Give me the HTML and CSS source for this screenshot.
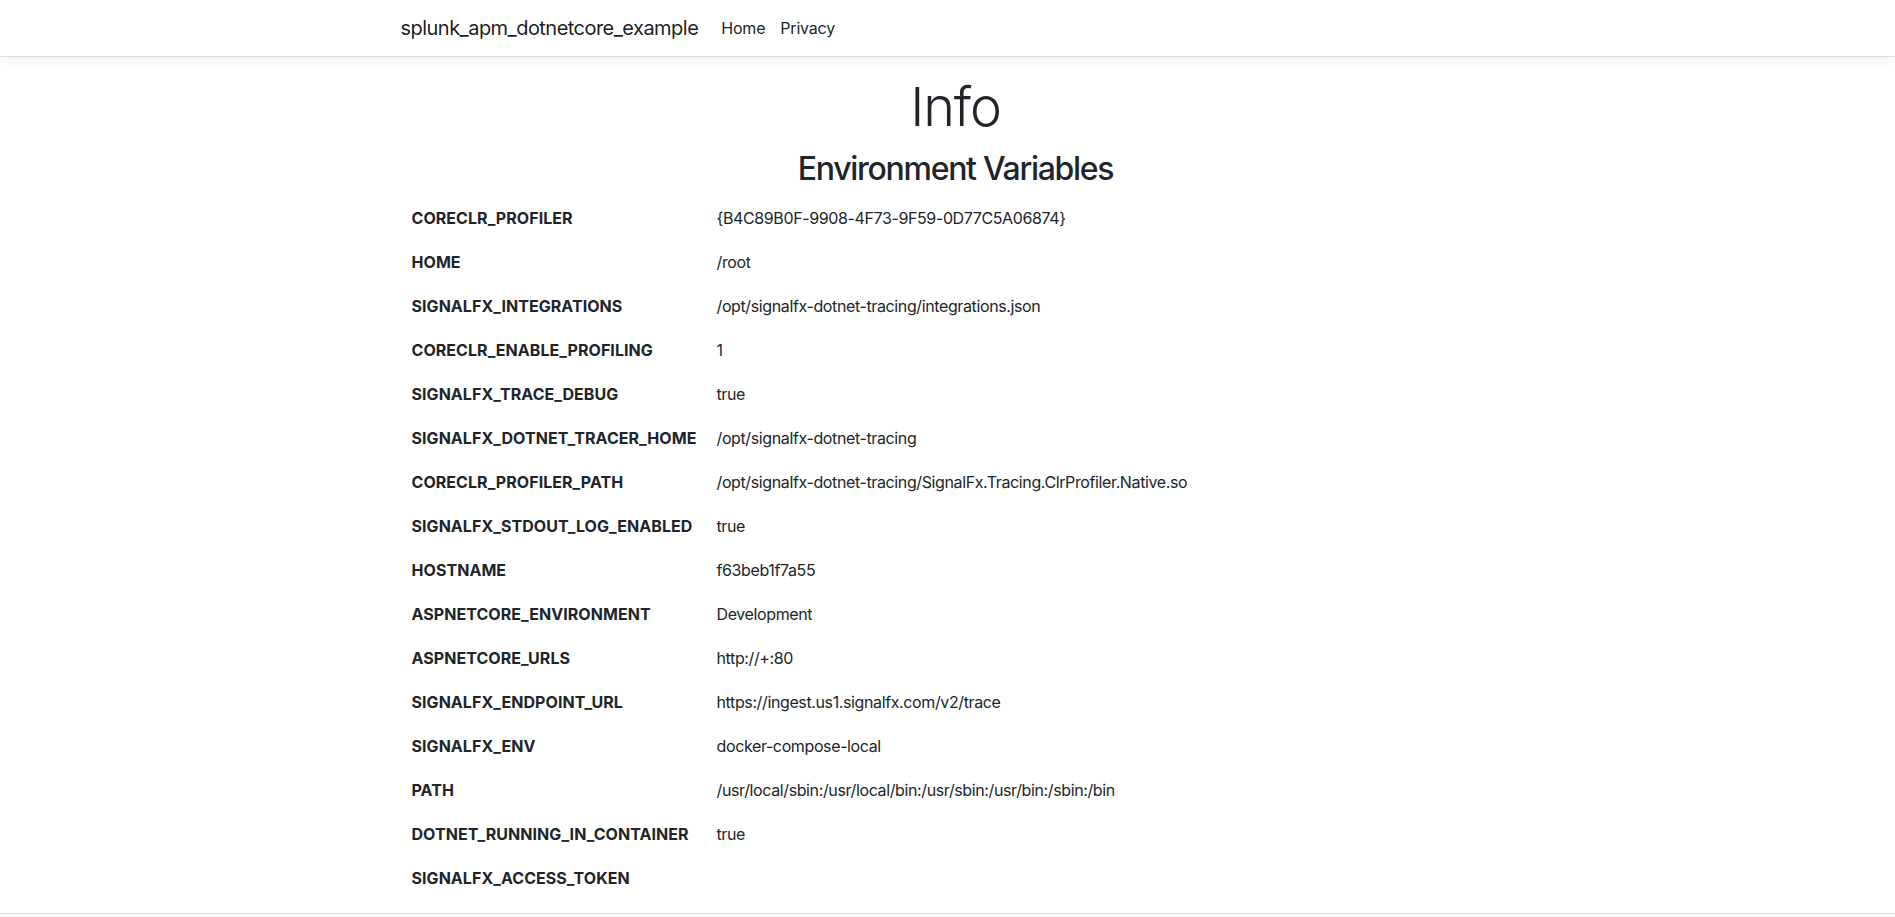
FILE: index.html
```html
<!DOCTYPE html>
<html lang="en">
<head>
<meta charset="utf-8">
<title>Info - splunk_apm_dotnetcore_example</title>
<link rel="stylesheet" href="styles.css">
</head>
<body>
<header class="navbar">
  <div class="container nav-inner">
    <a class="brand" href="#">splunk_apm_dotnetcore_example</a>
    <nav class="nav-links">
      <a class="nav-link" href="#">Home</a>
      <a class="nav-link" href="#">Privacy</a>
    </nav>
  </div>
</header>
<main class="container">
  <h1 class="title">Info</h1>
  <h2 class="subtitle">Environment Variables</h2>
  <div class="env">
    <div class="row"><span class="key">CORECLR_PROFILER</span><span class="val">{B4C89B0F-9908-4F73-9F59-0D77C5A06874}</span></div>
    <div class="row"><span class="key">HOME</span><span class="val">/root</span></div>
    <div class="row"><span class="key">SIGNALFX_INTEGRATIONS</span><span class="val">/opt/signalfx-dotnet-tracing/integrations.json</span></div>
    <div class="row"><span class="key">CORECLR_ENABLE_PROFILING</span><span class="val">1</span></div>
    <div class="row"><span class="key">SIGNALFX_TRACE_DEBUG</span><span class="val">true</span></div>
    <div class="row"><span class="key">SIGNALFX_DOTNET_TRACER_HOME</span><span class="val">/opt/signalfx-dotnet-tracing</span></div>
    <div class="row"><span class="key">CORECLR_PROFILER_PATH</span><span class="val">/opt/signalfx-dotnet-tracing/SignalFx.Tracing.ClrProfiler.Native.so</span></div>
    <div class="row"><span class="key">SIGNALFX_STDOUT_LOG_ENABLED</span><span class="val">true</span></div>
    <div class="row"><span class="key">HOSTNAME</span><span class="val">f63beb1f7a55</span></div>
    <div class="row"><span class="key">ASPNETCORE_ENVIRONMENT</span><span class="val">Development</span></div>
    <div class="row"><span class="key">ASPNETCORE_URLS</span><span class="val">http://+:80</span></div>
    <div class="row"><span class="key">SIGNALFX_ENDPOINT_URL</span><span class="val">https://ingest.us1.signalfx.com/v2/trace</span></div>
    <div class="row"><span class="key">SIGNALFX_ENV</span><span class="val">docker-compose-local</span></div>
    <div class="row"><span class="key">PATH</span><span class="val">/usr/local/sbin:/usr/local/bin:/usr/sbin:/usr/bin:/sbin:/bin</span></div>
    <div class="row"><span class="key">DOTNET_RUNNING_IN_CONTAINER</span><span class="val">true</span></div>
    <div class="row"><span class="key">SIGNALFX_ACCESS_TOKEN</span><span class="val"></span></div>
  </div>
</main>
<footer class="footer"></footer>
</body>
</html>
```

FILE: styles.css
```css
* { box-sizing: border-box; }

html, body {
  margin: 0;
  padding: 0;
}

body {
  font-family: Inter, "Noto Sans", "Liberation Sans", sans-serif;
  font-size: 16px;
  line-height: 1.5;
  color: #212529;
  background: #fff;
}

a { text-decoration: none; }

.container {
  width: 1110px;
  margin-left: calc(50% - 547px);
}

.navbar {
  height: 57px;
  background: #fff;
  border-bottom: 1px solid #dee2e6;
  box-shadow: 0 4px 12px rgba(0, 0, 0, 0.05);
}

.nav-inner {
  height: 56px;
  display: flex;
  align-items: center;
}

.brand {
  font-size: 20px;
  line-height: 30px;
  color: rgba(0, 0, 0, 0.9);
  margin-right: 15px;
  letter-spacing: -0.53px;
}

.nav-links {
  display: flex;
}

.nav-link {
  color: #212529;
  padding: 0 7px 0 8px;
  font-size: 16px;
  letter-spacing: -0.2px;
}

.title {
  margin: 18px 0 0;
  text-align: center;
  font-size: 54px;
  font-weight: 300;
  line-height: 1.2;
  letter-spacing: -1.2px;
}

.subtitle {
  margin: 10px 0 0;
  text-align: center;
  font-size: 32px;
  font-weight: 500;
  line-height: 1.2;
  letter-spacing: -1.3px;
}

.env {
  margin-top: 8px;
  padding-left: 11px;
}

.row {
  display: grid;
  grid-template-columns: 305px 1fr;
  height: 44px;
  align-items: center;
}

.key {
  font-weight: 700;
  font-size: 16px;
  letter-spacing: 0.05px;
}

.val {
  font-size: 16px;
  letter-spacing: -0.38px;
}

.footer {
  margin-top: 13px;
  height: 3px;
  border-top: 1px solid #dee2e6;
}
```
